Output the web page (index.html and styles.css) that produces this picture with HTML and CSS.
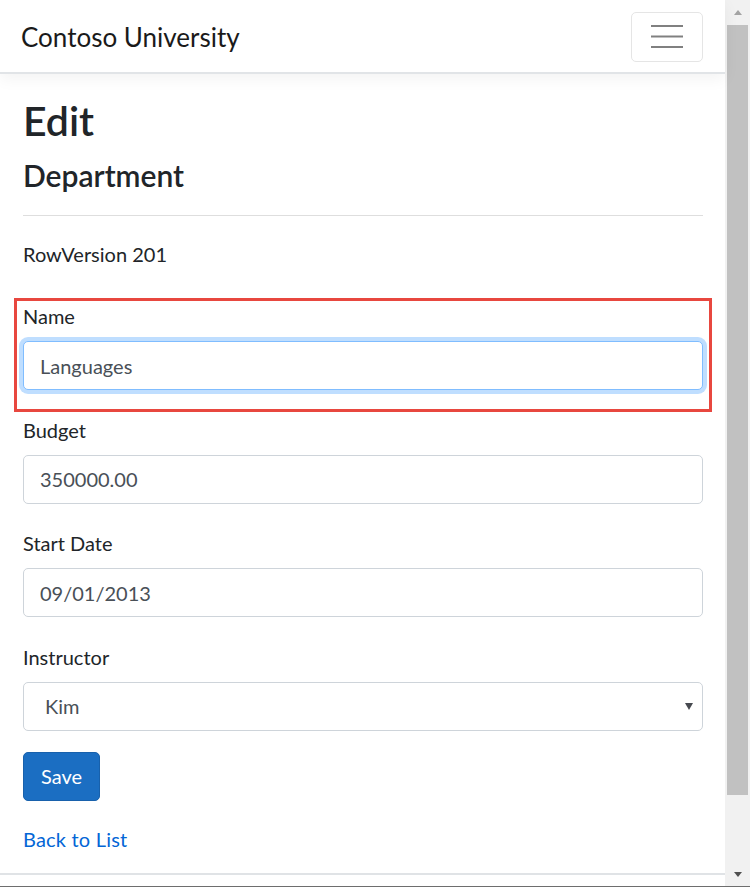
FILE: index.html
```html
<!DOCTYPE html>
<html lang="en">
<head>
<meta charset="utf-8">
<title>Edit - Contoso University</title>
<link rel="stylesheet" href="styles.css">
</head>
<body>
<div class="window">
  <div class="frame">
    <div class="viewport">
      <header class="navbar">
        <a class="brand" href="#">Contoso University</a>
        <button class="toggler" type="button" aria-label="Toggle navigation">
          <svg class="toggler-icon" width="32" height="24" viewBox="0 0 32 24">
            <line x1="0" y1="1" x2="32" y2="1"></line>
            <line x1="0" y1="11.5" x2="32" y2="11.5"></line>
            <line x1="0" y1="22" x2="32" y2="22"></line>
          </svg>
        </button>
      </header>
      <main class="container">
        <h1 class="title">Edit</h1>
        <h2 class="subtitle">Department</h2>
        <hr class="rule">
        <p class="rowversion">RowVersion 201</p>
        <form class="form">
          <div class="form-group highlighted">
            <label class="label">Name</label>
            <input class="form-control is-focused" type="text" value="Languages">
          </div>
          <div class="form-group">
            <label class="label">Budget</label>
            <input class="form-control" type="text" value="350000.00">
          </div>
          <div class="form-group">
            <label class="label">Start Date</label>
            <input class="form-control" type="text" value="09/01/2013">
          </div>
          <div class="form-group">
            <label class="label">Instructor</label>
            <div class="select-wrap">
              <select class="form-control select">
                <option>Kim</option>
              </select>
            </div>
          </div>
          <button class="btn" type="button">Save</button>
        </form>
        <a class="back" href="#">Back to List</a>
      </main>
      <footer class="footer"></footer>
    </div>
    <div class="scrollbar">
      <div class="sb-btn sb-up"><span class="tri-up"></span></div>
      <div class="sb-thumb"></div>
      <div class="sb-space"></div>
      <div class="sb-btn sb-down"><span class="tri-down"></span></div>
    </div>
  </div>
  <div class="edge"></div>
</div>
</body>
</html>
```
FILE: styles.css
```css
* { box-sizing: border-box; }

html, body {
  margin: 0;
  padding: 0;
  background: #ffffff;
}

body {
  font-family: Lato, "Liberation Sans", sans-serif;
  font-size: 20px;
  line-height: 30px;
  color: #212529;
}

.window {
  width: 750px;
  height: 887px;
  display: flex;
  flex-direction: column;
  overflow: hidden;
}

.frame {
  height: 886px;
  display: flex;
}

.edge {
  height: 1px;
  background: #6e6e6e;
}

.viewport {
  flex: 1;
  display: flex;
  flex-direction: column;
  background: #ffffff;
}

/* Navbar */
.navbar {
  height: 74px;
  flex: none;
  display: flex;
  align-items: center;
  justify-content: space-between;
  padding: 0 22px 0 21px;
  border-bottom: 2px solid #e1e4e7;
  box-shadow: 0 5px 15px rgba(0, 0, 0, 0.05);
  position: relative;
  z-index: 1;
}

.brand {
  font-size: 26px;
  line-height: 32px;
  color: #1a1a1a;
  text-decoration: none;
  margin-top: 2px;
}

.toggler {
  width: 72px;
  height: 50px;
  margin-top: 1px;
  padding: 0;
  background: #ffffff;
  border: 1px solid #e5e5e5;
  border-radius: 5px;
  display: flex;
  align-items: center;
  justify-content: center;
}

.toggler-icon line {
  stroke: #808080;
  stroke-width: 2;
}

/* Content */
.container {
  padding: 0 22px 0 23px;
}

.title {
  margin: 22px 0 0;
  font-size: 41px;
  line-height: 50px;
  font-weight: 600;
  color: #212529;
}

.subtitle {
  margin: 11px 0 0;
  font-size: 30px;
  line-height: 36px;
  font-weight: 600;
  color: #212529;
}

.rule {
  margin: 22px 0 0;
  border: 0;
  height: 1px;
  background: #dedede;
}

.rowversion {
  margin: 23px 0 0;
}

.form {
  margin-top: 32px;
}

.form-group {
  margin-bottom: 24.5px;
}

.form-group:last-of-type {
  margin-bottom: 21px;
}

.highlighted {
  position: relative;
}

.highlighted::after {
  content: "";
  position: absolute;
  left: -9px;
  right: -9px;
  top: -3px;
  bottom: -22px;
  border: 3px solid #e8473f;
  pointer-events: none;
}

.label {
  display: block;
  margin-bottom: 10px;
  line-height: 30px;
}

.form-control {
  display: block;
  width: 100%;
  height: 49px;
  padding: 0 15px 0 16px;
  font-family: Lato, "Liberation Sans", sans-serif;
  font-size: 20px;
  color: #495057;
  background: #ffffff;
  border: 1px solid #ced4da;
  border-radius: 5px;
  outline: none;
}

.is-focused {
  border-color: #80bdff;
  box-shadow: 0 0 0 4px rgba(0, 123, 255, 0.25);
}

.select-wrap {
  position: relative;
}

.select {
  appearance: none;
  -webkit-appearance: none;
  padding-left: 21px;
}

.select-wrap::after {
  content: "";
  position: absolute;
  right: 10px;
  top: 21px;
  width: 0;
  height: 0;
  border-left: 4.5px solid transparent;
  border-right: 4.5px solid transparent;
  border-top: 7px solid #474a50;
  pointer-events: none;
}

.btn {
  display: block;
  height: 49px;
  padding: 0 17px;
  font-family: Lato, "Liberation Sans", sans-serif;
  font-size: 20px;
  color: #ffffff;
  background: #1b6ec2;
  border: 1px solid #1861ac;
  border-radius: 5px;
}

.back {
  display: inline-block;
  margin-top: 23px;
  color: #0366d6;
  text-decoration: none;
  letter-spacing: 0.2px;
}

.footer {
  margin-top: 19px;
  border-top: 2px solid #e0e3e6;
}

/* Scrollbar */
.scrollbar {
  width: 25px;
  flex: none;
  background: #f1f1f1;
  display: flex;
  flex-direction: column;
}

.sb-btn {
  display: flex;
  align-items: center;
  justify-content: center;
}

.sb-up {
  height: 25px;
}

.sb-down {
  height: 24px;
}

.sb-thumb {
  height: 770px;
  margin: 0 2px;
  background: #c1c1c1;
}

.sb-space {
  flex: 1;
}

.tri-up {
  width: 0;
  height: 0;
  border-left: 4.5px solid transparent;
  border-right: 4.5px solid transparent;
  border-bottom: 5px solid #a3a3a3;
}

.tri-down {
  width: 0;
  height: 0;
  border-left: 4.5px solid transparent;
  border-right: 4.5px solid transparent;
  border-top: 5px solid #505050;
}
```
